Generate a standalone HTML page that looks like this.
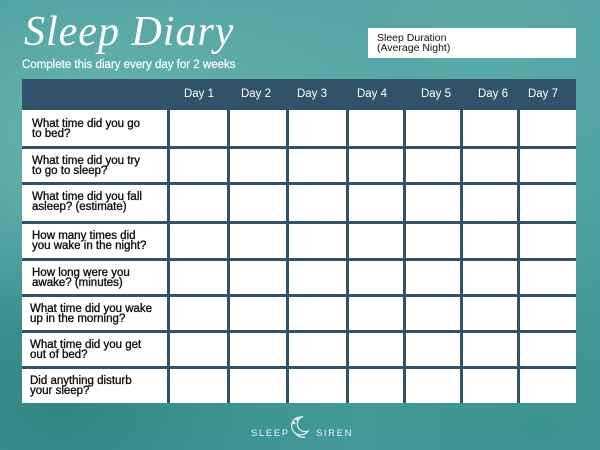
<!DOCTYPE html>
<html><head><style>
body{margin:0;width:600px;height:450px;overflow:hidden;position:relative;font-family:"Liberation Sans",sans-serif;
background:radial-gradient(ellipse at 20% 30%,#6bb5b1 0%,transparent 45%),radial-gradient(ellipse at 80% 10%,#5aa9a6 0%,transparent 50%),radial-gradient(ellipse at 10% 90%,#2f8682 0%,transparent 40%),radial-gradient(ellipse at 90% 95%,#3c938f 0%,transparent 45%),#4a9f9b;}
.t{position:absolute;left:24px;top:8px;font-family:"Liberation Serif",serif;font-style:italic;font-size:42px;color:#fff;letter-spacing:1px}
.s{position:absolute;left:22px;top:59px;font-size:11.5px;color:#fff;-webkit-text-stroke:0.2px #fff}
.box{position:absolute;left:368px;top:28px;width:208px;height:30px;background:#fff;font-size:10.5px;line-height:10px;color:#111;box-sizing:border-box;padding:5px 0 0 9px}
.hd{position:absolute;left:22px;top:79px;width:554px;height:31px;background:#30536a}
.hd span{position:absolute;top:9px;font-size:11.5px;color:#fff;transform:translateX(-50%)}
.grid{position:absolute;left:22px;top:110px;width:554px;height:293px;background:#30536a}
.c{position:absolute;background:#fff}
.l{position:absolute;font-size:11.5px;line-height:10px;color:#111;-webkit-text-stroke:0.35px #111}
.logo{position:absolute;top:428px;font-size:9.5px;color:#e8f5f4;letter-spacing:1.6px}
</style></head><body>
<div class="t">Sleep Diary</div>
<div class="s">Complete this diary every day for 2 weeks</div>
<div class="box">Sleep Duration<br>(Average Night)</div>
<div class="hd">
<span style="left:177px">Day 1</span><span style="left:234px">Day 2</span><span style="left:290px">Day 3</span><span style="left:350px">Day 4</span><span style="left:414px">Day 5</span><span style="left:471px">Day 6</span><span style="left:521px">Day 7</span>
</div>
<div class="grid" id="g"></div>
<div class="logo" style="left:251px">SLEEP</div>
<svg style="position:absolute;left:289px;top:413px" width="24" height="28" viewBox="0 0 24 28" fill="none" stroke="#e8f5f4" stroke-width="1.2"><path d="M13 4a9 9 0 1 0 6 14 7 7 0 1 1-6-14z"/><path d="M6 20c2 3 6 5 10 4"/><circle cx="8" cy="6" r="1"/><circle cx="5" cy="10" r=".8"/></svg>
<div class="logo" style="left:316px">SIREN</div>
<script>
var g=document.getElementById('g');
var rows=[0,37,73,112,149,185,221,257,293];
var cols=[0,146,206,265,325,382,439,496,554];
var labels=["What time did you go<br>to bed?","What time did you try<br>to go to sleep?","What time did you fall<br>asleep? (estimate)","How many times did<br>you wake in the night?","How long were you<br>awake? (minutes)","What time did you wake<br>up in the morning?","What time did you get<br>out of bed?","Did anything disturb<br>your sleep?"];
var h='';
for(var r=0;r<8;r++){for(var c=0;c<8;c++){
var x=cols[c]+(c?1.5:0),w=cols[c+1]-x-(c<7?1.5:0),y=rows[r]+(r?1.5:0),hh=rows[r+1]-y-(r<7?1.5:0);
h+='<div class="c" style="left:'+x+'px;top:'+y+'px;width:'+w+'px;height:'+hh+'px"></div>';}
h+='<div class="l" style="left:'+(r>4?8:10)+'px;top:'+(rows[r]+9)+'px">'+labels[r]+'</div>';}
g.innerHTML=h;
</script>
</body></html>
